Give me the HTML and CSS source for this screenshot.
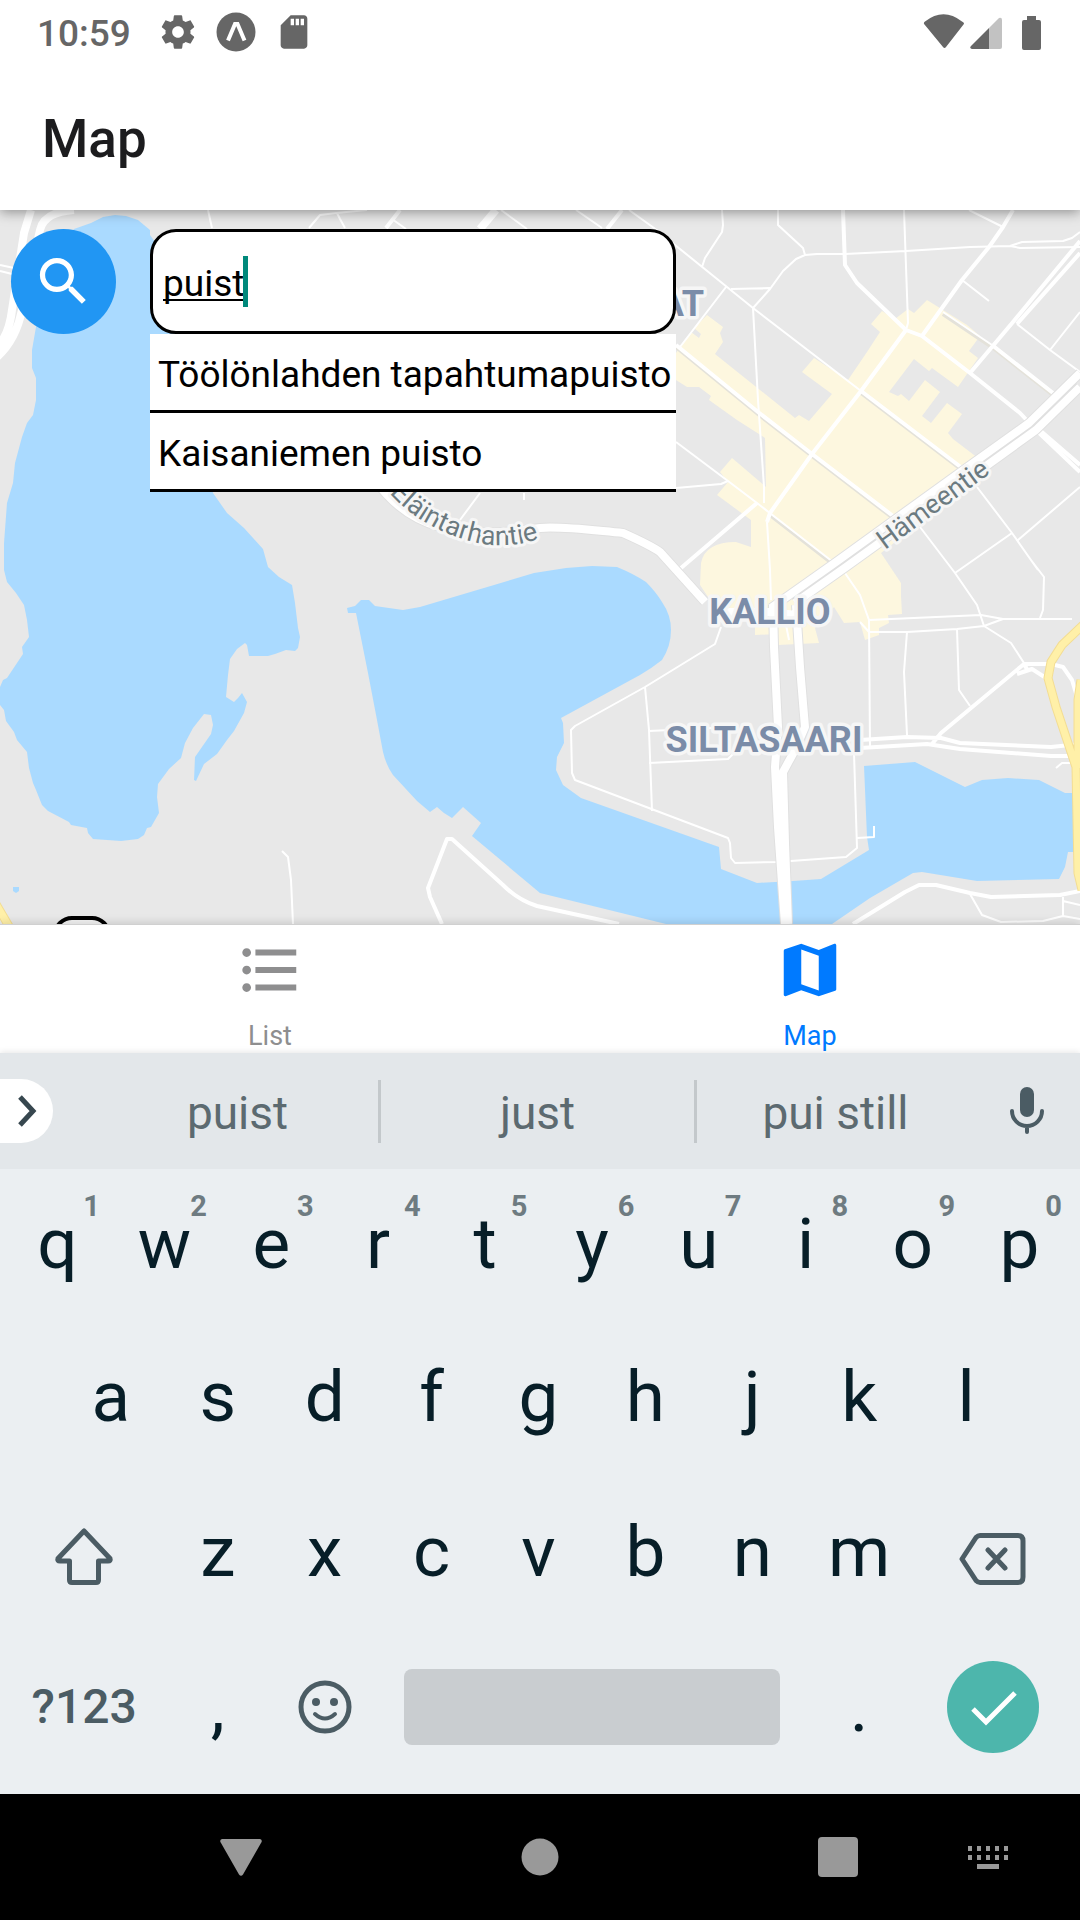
FILE: index.html
```html
<!DOCTYPE html>
<html lang="en">
<head>
<meta charset="utf-8">
<meta name="viewport" content="width=device-width, initial-scale=1">
<title>Map</title>
<link rel="stylesheet" href="styles.css">
</head>
<body>
<div class="status-bar">
  <time class="status-time">10:59</time>
  <div class="status-icons">
    <svg class="status-icon" viewBox="0 0 24 24"><path d="M19.43 12.98c.04-.32.07-.64.07-.98s-.03-.66-.07-.98l2.11-1.65c.19-.15.24-.42.12-.64l-2-3.46c-.12-.22-.39-.3-.61-.22l-2.49 1c-.52-.4-1.08-.73-1.69-.98l-.38-2.65C14.46 2.18 14.25 2 14 2h-4c-.25 0-.46.18-.49.42l-.38 2.65c-.61.25-1.17.59-1.69.98l-2.49-1c-.23-.09-.49 0-.61.22l-2 3.46c-.13.22-.07.49.12.64l2.11 1.65c-.04.32-.07.65-.07.98s.03.66.07.98l-2.11 1.65c-.19.15-.24.42-.12.64l2 3.46c.12.22.39.3.61.22l2.49-1c.52.4 1.08.73 1.69.98l.38 2.65c.03.24.24.42.49.42h4c.25 0 .46-.18.49-.42l.38-2.65c.61-.25 1.17-.59 1.69-.98l2.49 1c.23.09.49 0 .61-.22l2-3.46c.12-.22.07-.49-.12-.64l-2.11-1.65zM12 15.5c-1.93 0-3.5-1.57-3.5-3.5s1.57-3.5 3.5-3.5 3.500 1.570 3.500 3.500-1.570 3.500-3.500 3.500z"/></svg>
    <svg class="status-icon" viewBox="0 0 40 40"><circle cx="20" cy="20" r="19.500"/><path d="M12 28.500L19 12h2.500L28.500 28.500" fill="none" stroke="#fff" stroke-width="4"/></svg>
    <svg class="status-icon" viewBox="0 0 24 24"><path d="M18 2h-8L4.020 8 4 20c0 1.100.9 2 2 2h12c1.100 0 2-.9 2-2V4c0-1.100-.9-2-2-2zm-6 6h-2V4h2v4zm3 0h-2V4h2v4zm3 0h-2V4h2v4z"/></svg>
  </div>
  <svg class="status-system" viewBox="0 0 120 40"><path d="M1.500 12.500Q0 11 2 9.500Q20.500-5 39 9.500Q42 11 40.500 12.500L23 35Q21.500 37 20 35Z"/><path d="M66 16V37H49Q46 36 48 34Z"/><path d="M66 16L76 6Q79 5 79 8V35Q79 37 77 37H66Z" fill="#c2c2c2"/><path d="M104 4h9v4h3q2 0 2 2v26q0 2-2 2h-15q-2 0-2-2V10q0-2 2-2h3z"/></svg>
</div>
<header class="app-header"><h1 class="app-title">Map</h1></header>

<main class="map-view">
  <svg class="map-canvas" viewBox="0 210 1080 714" preserveAspectRatio="xMidYMid slice" role="img" aria-label="Street map of Kallio and Siltasaari">
    <g class="water">
      <path d="M115 215L126 216 138 220 150 230 150 235 155 242 190 330 200 430 213 493 227 513 244 528 263 549 268 567 279 577 292 585 295 603 298 628 300 637 298 648 295 651 286 650 275 654 268 656 249 656 247 645 245 643 237 649 230 659 228 675 226 697 234 702 238 698 242 693 247 702 244 713 234 731 227 740 217 754 204 764 196 781 194 780 195 757 211 734 213 725 211 715 204 714 193 728 185 743 181 758 169 769 158 784 157 797 159 813 151 827 147 828 144 835 138 839 121 841 93 839 88 833 87 828 71 825 69 822 48 811 42 805 36 790 33 783 29 768 27 752 17 740 14 732 6 721 4 710 0 705V687L3 680 7 678 23 654 22 647 29 637 27 620 24 605 16 593 7 582 4 570 4 543 7 503 13 483 15 463 22 437 27 423 33 415 36 400 36 378 32 368 32 350 36 327 50 260 74 229 91 223 103 217Z"/>
      <path d="M347 608L355 606 361 600 369 600 375 606 403 610 420 607 534 573 566 568 592 566 617 567Q634 574 646 582 656 592 662 602 671 615 671 630 671 646 662 660 652 668 640 675L561 718 563 723 564 743 557 757 556 770 563 785 581 798 719 847 721 869 757 883 793 881 821 879 869 850 867 837 864 766 915 762 965 787 982 780 1008 778 1039 780 1065 793 1080 793V852H1068L1065 867 1059 879 977 881 922 872 913 873 870 898 832 924H666L540 893 472 836 481 823 463 807 452 818 444 813 437 807 430 812 417 801 393 775Q386 765 383 752L377 720 368 673 358 623 356 613 348 613Z"/>
      <path d="M13 887h6v4l-3 2-3-2z"/>
    </g>
    <path class="district" d="M707 315L723 327 720 333 723 342 715 354 795 418 799 415 809 421 832 394 802 372 814 358 848 380 867 352 880 332 871 324 882 311 895 319 908 309 914 313 927 300 967 325 980 336 969 351 978 358 958 387 932 368 929 371 914 359 889 392 898 396 901 394 909 401 925 380 940 392 922 416 931 423 947 403 962 414 948 433 953 439 991 468 881 553 901 583 901 596 902 614 888 615 889 623 879 628 879 635 865 640 860 622 844 623 834 607 815 628 819 643 778 645 777 634 755 635 755 620 712 603 700 585 701 563Q705 542 736 542L751 547V520L717 495 728 482 720 472 732 458 766 487 765 438 737 420 709 400 711 396 699 387 687 387 676 380V353L691 332 699 338 701 334 694 328Z"/>
    <g class="road road-casing">
      <path d="M676 347L758 414 812 456 893 518M861 393L962 470M943 314L992 347 1053 395M770 515L833 564"/>
    </g>
    <g class="road road-thin">
      <path d="M629 210L654 228 727 287 753 308 861 391M722 210L723 225 722 232 705 258 702 267M778 210V225L803 248 805 255 796 259 783 271 770 289 753 308 758 400 764 487V503M770 288L731 289M805 255L817 254 845 254 906 251 970 247 1010 246 1022 242 1063 241 1072 238 1080 232M1010 246L1020 248 1080 247M904 210L908 323 906 330M969 210L1003 227M962 280L989 301M1017 324L1050 350 1080 372M1080 312L1050 350M676 442L728 481 757 503 833 562M676 488L721 484 728 481M726 287L680 347M767 522L770 570 771 600M943 312L992 345"/>
      <path d="M977 487L1012 533 1038 570M1080 487L1018 540M1012 533L955 573M920 527L955 573 977 605 984 626 1011 643 1024 663M1031 560L1044 577 1043 610 1040 618M869 620L981 615 1003 619 1072 619M869 632L907 632 957 629 984 626 1003 619M845 573L860 595 869 620 870 748M860 622L869 632M907 632L904 672 907 735M957 629L959 690 970 706M1056 768L1062 763H1080M785 620L789 640"/>
      <path d="M721 627L715 644 645 687 575 726 571 730 572 773 575 780 728 838 730 843 731 858 735 863 777 862 846 857 857 848 854 753M645 687L649 730 652 811M649 731L712 728M649 763L728 759 733 754M857 838L874 837V826M970 894L982 915 1001 922 1043 921 1063 916 1080 919M1063 897V916M1063 901L1080 905M282 851L288 857 291 880 293 924"/>
      <path d="M208 210L212 228M309 228L320 215 336 213 367 210M337 213L340 219 345 228M392 219L406 229M576 210L602 228M480 493L460 520M524 493V500M0 265L14 268M0 271L12 274M501 210L527 229"/>
    </g>
    <g class="road road-medium">
      <path d="M843 210L845 265 857 283 906 330 922 336 970 373 1020 413 1036 430 1080 472M1028 420L1080 465M1013 210L1003 227 989 247 962 280 922 336M992 345L1053 393M1080 241L1013 322 970 373M1080 253L1017 324M676 345L758 412 812 454 893 516M861 391L962 468M906 330L861 391 812 454 770 513 767 522M757 503L681 568M400 210L386 228M622 210L607 229"/>
      <path d="M932 744L941 733 1024 664 1051 664 1063 667 1072 680 1078 700M1017 674L1032 669 1046 678M1024 664L1028 671M860 740L907 737 941 738 960 743 1051 747 1080 744M860 748L927 744 960 749 1051 756H1080M853 924L905 892 919 885 936 885 970 893 991 897 1060 895 1080 891M442 924L430 897 428 888 447 839 452 839 503 885Q518 900 537 906L619 924"/>
    </g>
    <g class="road road-major-casing"><path d="M773 605L774 647 778 727 775 767 778 827 782 883 785 924M796 605L800 667 805 727 795 750 783 772 785 843 788 924M375 480C410 530 460 540 540 528 560 526 590 530 623 533Q650 545 660 552L705 602M771 608L836 562 962 471 1029 423 1080 373M795 603L846 567 1036 430 1080 387"/></g>
    <g class="road road-major">
      <path d="M773 605L774 647 778 727 775 767 778 827 782 883 785 924M796 605L800 667 805 727 795 750 783 772 785 843 788 924M375 480C410 530 460 540 540 528 560 526 590 530 623 533Q650 545 660 552L705 602M709 612H770L796 615M771 608L836 562 962 471 1029 423 1080 373M795 603L846 567 1036 430 1080 387"/>
      <path d="M31 210L24 233 12 310Q9 335 -3 347M74 210Q44 212 40 230L22 310Q16 340 -3 357M496 210L480 229"/>
    </g>
    <path class="highway-casing" d="M1083 625L1062 645 1051 662 1048 678 1056 707 1076 767 1078 873 1082 890M1081 680L1078 700V768M-4 904L10 928"/>
    <path class="highway" d="M1083 625L1062 645 1051 662 1048 678 1056 707 1076 767 1078 873 1082 890M1081 680L1078 700V768M-4 904L10 928"/>
    <path id="elaintarhantie" d="M380 482Q416 529 478 543 508 549 539 539" fill="none"/>
    <path id="hameentie" d="M885 550L999 467" fill="none"/>
    <text class="street-label" text-anchor="end"><textPath href="#elaintarhantie" startOffset="100%">Eläintarhantie</textPath></text>
    <text class="street-label"><textPath href="#hameentie">Hämeentie</textPath></text>
    <text class="area-label" x="704" y="316" text-anchor="end">AT</text>
    <text class="area-label" x="770" y="624" text-anchor="middle">KALLIO</text>
    <text class="area-label" x="764" y="752" text-anchor="middle">SILTASAARI</text>
    <rect x="55" y="918" width="54" height="60" rx="17" fill="#f4f4f4" stroke="#000" stroke-width="4"/>
  </svg>
  <form class="search" role="search">
    <button class="search-button" type="button" aria-label="Search"><svg class="search-icon" viewBox="0 0 24 24"><path d="M15.500 14h-.79l-.28-.27C15.410 12.590 16 11.110 16 9.500 16 5.910 13.090 3 9.500 3S3 5.910 3 9.500 5.910 16 9.500 16c1.610 0 3.090-.59 4.230-1.570l.27.280v.79l5 4.990L20.490 19l-4.990-5zm-6 0C7.010 14 5 11.990 5 9.500S7.010 5 9.500 5 14 7.010 14 9.500 11.990 14 9.500 14z"/></svg></button>
    <div class="autocomplete">
      <div class="search-field">
        <input class="search-input" type="text" value="puist" aria-label="Search places">
        <span class="search-caret"></span>
      </div>
      <ul class="results">
        <li><button class="result" type="button">Töölönlahden tapahtumapuisto</button></li>
        <li><button class="result" type="button">Kaisaniemen puisto</button></li>
      </ul>
    </div>
  </form>
</main>

<nav class="tab-bar">
  <a class="tab" href="#list"><svg class="tab-icon" viewBox="0 0 24 24"><path d="M4 10.500c-.83 0-1.500.67-1.500 1.500s.67 1.500 1.500 1.500 1.500-.67 1.500-1.500-.67-1.500-1.500-1.500zm0-6c-.83 0-1.500.67-1.500 1.500S3.170 7.500 4 7.500 5.500 6.830 5.500 6 4.830 4.500 4 4.500zm0 12c-.83 0-1.500.68-1.500 1.500s.68 1.500 1.500 1.500 1.500-.68 1.500-1.500-.67-1.500-1.500-1.500zM7 19h14v-2H7v2zm0-6h14v-2H7v2zm0-8v2h14V5H7z"/></svg><span>List</span></a>
  <a class="tab tab-active" href="#map" aria-current="page"><svg class="tab-icon" viewBox="0 0 24 24"><path d="M20.500 3l-.16.030L15 5.100 9 3 3.360 4.900c-.21.070-.36.250-.36.480V20.500c0 .28.220.5.5.5l.16-.03L9 18.900l6 2.100 5.640-1.900c.21-.07.36-.25.36-.48V3.500c0-.28-.22-.5-.5-.5zM15 19l-6-2.110V5l6 2.110V19z"/></svg><span>Map</span></a>
</nav>

<section class="keyboard" aria-label="Keyboard">
  <div class="suggestions">
    <button class="expand" type="button" aria-label="More tools"><svg class="expand-icon" viewBox="0 0 24 34"><path d="M5 3L18 17 5 31"/></svg></button>
    <button class="suggestion" type="button">puist</button>
    <span class="divider"></span>
    <button class="suggestion" type="button">just</button>
    <span class="divider"></span>
    <button class="suggestion" type="button">pui still</button>
    <button class="mic" type="button" aria-label="Voice input"><svg class="mic-icon" viewBox="0 0 48 48"><rect x="17" y="0" width="14" height="30" rx="7" fill="currentColor"/><path d="M9 24a15 15 0 0 0 30 0M24 39V45"/></svg></button>
  </div>
  <div class="keys">
    <div class="key-row key-row-top">
      <button class="key">q<span class="hint">1</span></button><button class="key">w<span class="hint">2</span></button><button class="key">e<span class="hint">3</span></button><button class="key">r<span class="hint">4</span></button><button class="key">t<span class="hint">5</span></button><button class="key">y<span class="hint">6</span></button><button class="key">u<span class="hint">7</span></button><button class="key">i<span class="hint">8</span></button><button class="key">o<span class="hint">9</span></button><button class="key">p<span class="hint">0</span></button>
    </div>
    <div class="key-row key-row-home">
      <button class="key">a</button><button class="key">s</button><button class="key">d</button><button class="key">f</button><button class="key">g</button><button class="key">h</button><button class="key">j</button><button class="key">k</button><button class="key">l</button>
    </div>
    <div class="key-row">
      <button class="key key-wide" aria-label="Shift"><svg class="key-icon" viewBox="0 0 70 70"><path d="M35 14L9 41.500Q8 44 11 44H20.500V63Q20.500 65.500 23 65.500H47Q49.500 65.500 49.500 63V44H59Q62 44 61 41.500Z"/></svg></button>
      <button class="key">z</button><button class="key">x</button><button class="key">c</button><button class="key">v</button><button class="key">b</button><button class="key">n</button><button class="key">m</button>
      <button class="key key-wide" aria-label="Backspace"><svg class="key-icon" viewBox="0 0 70 70"><path d="M4 42L18 20.500Q20 18.500 22 18.500H60Q65 18.500 65 24V60Q65 65.500 60 65.500H22Q20 65.500 18 63.500ZM30 33L47 51M47 33L30 51"/></svg></button>
    </div>
    <div class="key-row">
      <button class="key key-wide key-symbols">?123</button>
      <button class="key">,</button>
      <button class="key" aria-label="Emoji"><svg class="emoji-icon" viewBox="0 0 54 54"><circle cx="27" cy="27" r="24" fill="none" stroke="currentColor" stroke-width="5"/><circle cx="18" cy="22" r="4"/><circle cx="36" cy="22" r="4"/><path d="M17 34Q27 43 37 34" fill="none" stroke="currentColor" stroke-width="4" stroke-linecap="round"/></svg></button>
      <button class="key key-space" aria-label="Space"><span class="space-bar"></span></button>
      <button class="key">.</button>
      <button class="key key-wide" aria-label="Done"><svg class="done-icon" viewBox="0 0 92 92"><circle cx="46" cy="46" r="46" fill="#4db6ac"/><path d="M26 48L39 61 68 32" fill="none" stroke="#fff" stroke-width="5"/></svg></button>
    </div>
  </div>
</section>

<nav class="system-nav">
  <button class="nav-back" aria-label="Back"><svg class="nav-icon" viewBox="0 0 42 42"><path d="M2 3H40Q43 4 41 7L23 38.500Q21 41 19 38.500L1 7Q-1 4 2 3Z"/></svg></button>
  <button class="nav-home" aria-label="Home"><svg class="nav-icon" viewBox="0 0 42 42"><circle cx="21" cy="21" r="18.500"/></svg></button>
  <button class="nav-recent" aria-label="Recent apps"><svg class="nav-icon" viewBox="0 0 42 42"><rect x="1" y="1" width="40" height="40" rx="4"/></svg></button>
  <button class="nav-keyboard" aria-label="Switch keyboard"><svg class="nav-icon" viewBox="0 0 42 42"><path d="M1 10h4v5h-4zM10 10h4v5h-4zM19 10h4v5h-4zM28 10h4v5h-4zM37 10h4v5h-4zM1 19h4v5h-4zM10 19h4v5h-4zM19 19h4v5h-4zM28 19h4v5h-4zM37 19h4v5h-4zM10 28h22v5h-22z"/></svg></button>
</nav>
</body>
</html>
```
FILE: styles.css
```css
* { box-sizing: border-box; }

body {
  margin: 0;
  min-height: 100vh;
  display: flex;
  flex-direction: column;
  background: #fff;
  font-family: Roboto, "Liberation Sans", sans-serif;
}

button {
  margin: 0;
  padding: 0;
  border: 0;
  background: none;
  color: inherit;
  font: inherit;
}

svg { display: block; }

.status-bar {
  display: flex;
  align-items: center;
  height: 63px;
  padding: 0 37px;
  color: #666;
  fill: #666;
}

.status-time { font-size: 37px; font-weight: 500; line-height: 40px; padding-top: 4px; }
.status-icons { display: flex; gap: 18px; margin-left: 27px; }
.status-icon { width: 40px; height: 40px; }
.status-system { width: 120px; height: 40px; margin-left: auto; }

.app-header {
  position: relative;
  z-index: 1;
  display: flex;
  align-items: center;
  height: 147px;
  padding: 4px 42px 0;
  background: #fff;
  box-shadow: 0 2px 12px rgba(0, 0, 0, .4);
  clip-path: inset(0 0 -20px 0);
}

.app-title { margin: 0; color: #1c1c1e; font-size: 53px; font-weight: 500; line-height: 64px; }

.map-view {
  position: relative;
  flex: 1 0 auto;
  min-height: 300px;
  padding: 19px 11px;
  overflow: hidden;
  background: #e8e8e8;
}

.map-canvas { position: absolute; inset: 0; width: 100%; height: 100%; }
.water { fill: #aadaff; }
.district { fill: #fdf7df; }
.road { fill: none; stroke: #fff; stroke-linejoin: round; }
.road-casing { stroke: #e4e2da; stroke-width: 4px; }
.road-thin { stroke-width: 2px; }
.road-medium { stroke-width: 4px; }
.road-major { stroke-width: 8px; }
.road-major-casing { stroke: #e0e0e0; stroke-width: 10px; }
.highway-casing { fill: none; stroke: #f3dd94; stroke-width: 9px; }
.highway { fill: none; stroke: #fff0a8; stroke-width: 7px; }

.street-label {
  font-size: 27px;
  fill: #6b7a80;
  stroke: #f6f6f6;
  stroke-width: 6px;
  stroke-linejoin: round;
  paint-order: stroke;
}

.area-label {
  font-size: 36px;
  font-weight: 700;
  fill: #7b8ca8;
  stroke: #f6f6f6;
  stroke-width: 7px;
  stroke-linejoin: round;
  paint-order: stroke;
}

.search { position: relative; display: flex; align-items: flex-start; gap: 34px; }

.search-button {
  display: grid;
  place-items: center;
  flex: none;
  width: 105px;
  height: 105px;
  border-radius: 50%;
  background: #2196f3;
}

.search-icon { width: 63px; height: 63px; fill: #fff; }
.autocomplete { flex: 0 1 526px; color: #000; font-size: 37px; }
.search-field { position: relative; }

.search-input {
  display: block;
  width: 100%;
  height: 105px;
  padding: 4px 10px 0;
  border: 3px solid #000;
  border-radius: 26px;
  outline: 0;
  background: #fff;
  color: #000;
  font: inherit;
  text-decoration: underline 2px;
  text-underline-offset: 3px;
  text-decoration-skip-ink: none;
}

.search-caret { position: absolute; left: 93px; top: 27px; width: 5px; height: 51px; background: #00897b; }
.results { margin: 0; padding: 0; list-style: none; }

.result {
  display: block;
  width: 100%;
  padding: 19px 0 13px 8px;
  border-bottom: 3px solid #000;
  background: #fff;
  line-height: 44px;
  text-align: left;
  white-space: nowrap;
}

.tab-bar {
  position: relative;
  display: flex;
  border-top: 1px solid #d0d0d0;
  background: #fff;
  box-shadow: 0 -2px 8px rgba(0, 0, 0, .12);
}

.tab {
  flex: 1;
  display: flex;
  flex-direction: column;
  align-items: center;
  gap: 15px;
  padding: 10px 0 1px;
  color: #8e8e8f;
  font-size: 27px;
  line-height: 32px;
  text-decoration: none;
}

.tab-active { color: #007aff; }
.tab-icon { width: 70px; height: 70px; fill: currentColor; }

.keyboard { position: relative; background: #ebeff2; color: #071e28; box-shadow: 0 -1px 6px rgba(0, 0, 0, .1); }

.suggestions {
  display: grid;
  grid-template-columns: 97px 281fr 3px 313fr 3px 277fr 106px;
  align-items: center;
  height: 116px;
  background: #e3e7ea;
  color: #5c6a70;
}

.expand { display: flex; align-items: center; width: 53px; height: 64px; padding-left: 15px; border-radius: 0 32px 32px 0; background: #fff; }
.expand-icon { width: 24px; height: 34px; fill: none; stroke: #37474f; stroke-width: 5px; }
.suggestion { padding-top: 4px; font-size: 46px; line-height: 56px; }
.divider { height: 63px; background: #c3c8cb; }
.mic { display: grid; place-items: center; }
.mic-icon { width: 48px; height: 48px; color: #4b5c64; fill: none; stroke: #4b5c64; stroke-width: 4px; stroke-linecap: round; }
.mic-icon rect { stroke: none; }

.keys { padding: 0 7px 10px 4px; }
.key-row { display: grid; grid-template-columns: repeat(20, 1fr); height: 155px; }
.key-row-top { height: 150px; }
.key-row-home { padding: 0 5%; grid-template-columns: repeat(18, 1fr); }
.key { position: relative; grid-column: span 2; display: grid; place-items: center; font-size: 71px; line-height: 84px; }
.key-wide { grid-column: span 3; }
.key-space { grid-column: span 8; justify-items: stretch; padding: 0 26px; }
.key-symbols { color: #4b5c64; font-size: 48px; font-weight: 500; }
.hint { position: absolute; top: 21px; right: 11px; color: #6e7b81; font-size: 29px; font-weight: 700; line-height: 32px; }
.key-icon { width: 70px; height: 70px; fill: none; stroke: #4b5c64; stroke-width: 5px; stroke-linecap: round; stroke-linejoin: round; }
.emoji-icon { width: 54px; height: 54px; color: #4b5c64; fill: #4b5c64; }
.space-bar { height: 76px; border-radius: 8px; background: #c9cdd0; }
.done-icon { width: 92px; height: 92px; }

.system-nav {
  display: grid;
  grid-template-columns: 150fr 448fr 148fr 152fr;
  align-items: center;
  height: 126px;
  padding: 0 16px 0 166px;
  background: #000;
}

.system-nav button { display: grid; place-items: center; }
.nav-icon { width: 42px; height: 42px; fill: #999; }
```
